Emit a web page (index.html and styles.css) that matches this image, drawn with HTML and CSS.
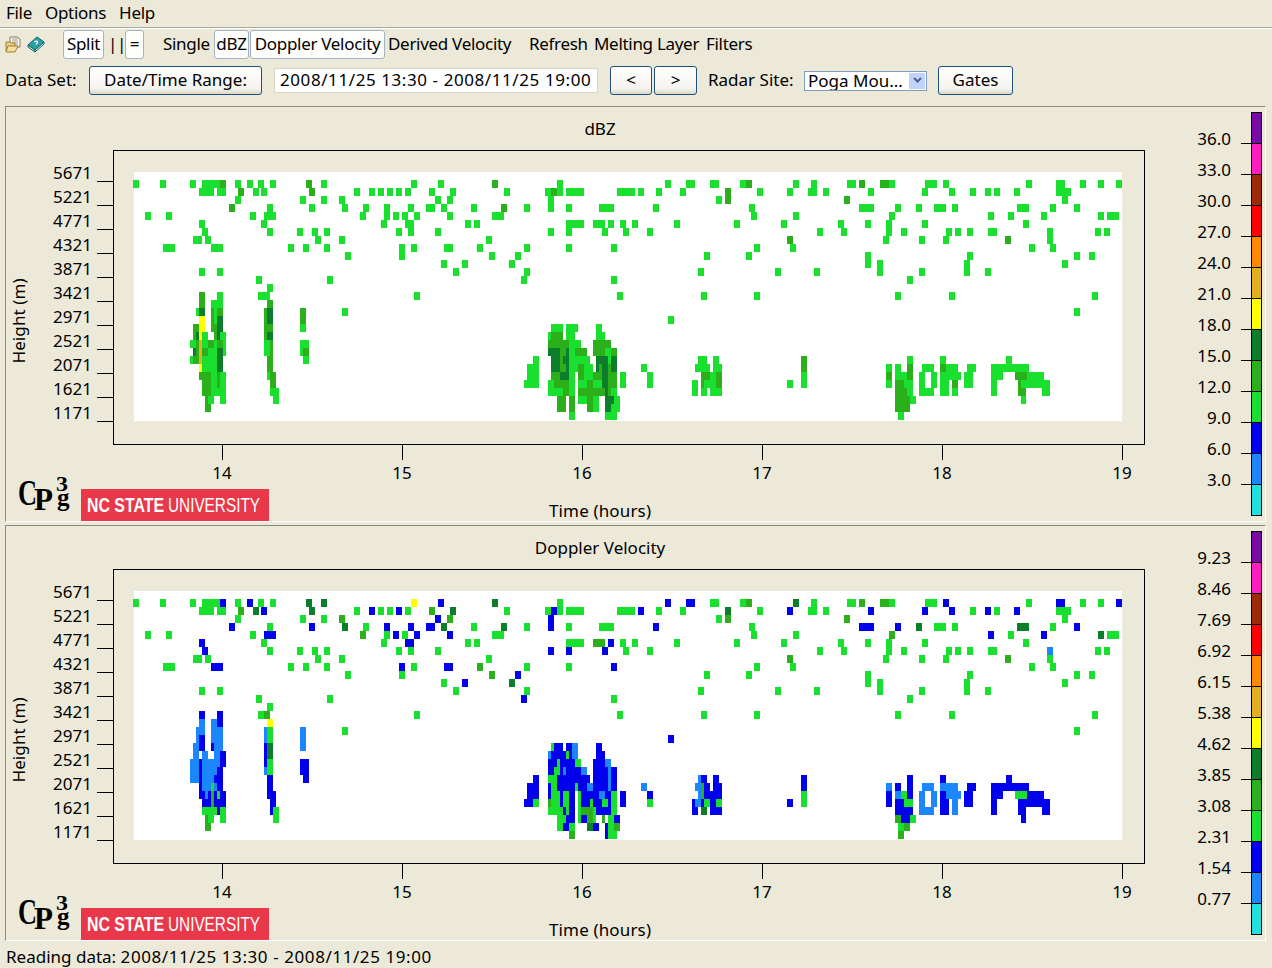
FILE: index.html
```html
<!DOCTYPE html>
<html lang="en">
<head>
    <meta charset="UTF-8">
    <title>Radar Viewer</title>
    <link rel="stylesheet" href="styles.css">
</head>
<body>
    <div class="menu-bar">
        <span>File</span>
        <span>Options</span>
        <span>Help</span>
    </div>

    <div class="tool-bar">
        <svg class="tool-icon" width="17" height="17" viewBox="0 0 17 17">
            <path d="M5 1h7l3 2v8H5z" fill="#fff" stroke="#8a7a50"/>
            <path d="M7 3h6M7 5h6M7 7h6M7 9h6" stroke="#9a9a8a"/>
            <path d="M1 6h4l1 1h4v8H1z" fill="#e8d080" stroke="#a08030"/>
            <path d="M3 10h10l-3 6H1z" fill="#f4e09a" stroke="#a08030"/>
        </svg>
        <svg class="tool-icon icon-book" width="18" height="17" viewBox="0 0 18 17">
            <path d="M1 9l9-8 7 5-9 8z" fill="#2aa0a8" stroke="#14606a"/>
            <path d="M1 9l7 5v2L1 11z" fill="#d8ecc0" stroke="#14606a"/>
            <path d="M8 16l9-8V6l-9 8z" fill="#e8f4d8" stroke="#14606a"/>
            <path d="M7.5 6c1-1.500 3.500-1 3 .5-.3 1-1.500 1-1.500 2" fill="none" stroke="#fff" stroke-width="1.200"/>
        </svg>
        <button class="tool-btn btn-split">Split</button>
        <span class="tool-text text-bars">||</span>
        <button class="tool-btn btn-equal">=</button>
        <span class="tool-text text-single">Single</span>
        <button class="tool-btn btn-dbz">dBZ</button>
        <button class="tool-btn btn-doppler">Doppler Velocity</button>
        <span class="tool-text text-derived">Derived Velocity</span>
        <span class="tool-text text-refresh">Refresh</span>
        <span class="tool-text text-melting">Melting Layer</span>
        <span class="tool-text text-filters">Filters</span>
    </div>

    <div class="data-bar">
        <span class="data-label">Data Set:</span>
        <button class="data-btn btn-range">Date/Time Range:</button>
        <div class="range-field"><span class="date-range">2008/11/25 13:30 - 2008/11/25 19:00</span></div>
        <button class="data-btn btn-prev">&lt;</button>
        <button class="data-btn btn-next">&gt;</button>
        <span class="data-label label-site">Radar Site:</span>
        <div class="site-select">
            <span class="site-value">Poga Mou...</span>
            <span class="site-arrow">
                <svg width="9" height="7" viewBox="0 0 9 7"><path d="M1 1l3.500 3.500L8 1" fill="none" stroke="#4d6185" stroke-width="2"/></svg>
            </span>
        </div>
        <button class="data-btn btn-gates">Gates</button>
    </div>

    <div class="plot-panel" id="dbz-panel"></div>
    <div class="plot-panel" id="velocity-panel"></div>

    <div class="status-bar">Reading data: <span class="date-range">2008/11/25 13:30 - 2008/11/25 19:00</span></div>

    <script src="plot.js"></script>
</body>
</html>
```

FILE: styles.css
```css
body {
    margin: 0;
    width: 1272px;
    height: 968px;
    overflow: hidden;
    background-color: #ece9d8;
    color: #000;
    font-family: "Noto Sans", sans-serif;
    font-size: 17px;
}

.menu-bar {
    display: flex;
    gap: 13px;
    height: 27px;
    line-height: 25px;
    padding-left: 6px;
    letter-spacing: -0.3px;
    border-bottom: 1px solid #aca899;
}

.tool-bar {
    display: flex;
    align-items: center;
    height: 31px;
    padding-left: 5px;
    border-top: 1px solid #fff;
}

.tool-icon {
    flex: none;
}

.icon-book {
    margin-left: 5px;
}

button {
    font-family: inherit;
    font-size: 17px;
    color: #000;
    padding: 0 0 2px;
    box-sizing: border-box;
}

.tool-btn {
    height: 29px;
    letter-spacing: -0.3px;
    background-color: #fdfdfb;
    border: 1px solid #a3b3c4;
    border-radius: 3px;
}

.btn-split { width: 41px; margin-left: 18px; }
.btn-equal { width: 19px; margin-left: 4px; }
.btn-dbz { width: 35px; margin-left: 5px; }
.btn-doppler { width: 135px; margin-left: 1px; }

.tool-text {
    padding-bottom: 2px;
    letter-spacing: -0.3px;
    white-space: nowrap;
}

.text-bars { width: 13px; margin-left: 4px; text-align: center; }
.text-single { width: 46px; margin-left: 19px; }
.text-derived { width: 125px; margin-left: 3px; }
.text-refresh { width: 58px; margin-left: 16px; }
.text-melting { width: 104px; margin-left: 7px; }
.text-filters { width: 46px; margin-left: 8px; }

.data-bar {
    display: flex;
    align-items: center;
    height: 29px;
    margin-top: 6px;
    padding-left: 5px;
}

.data-label {
    width: 72px;
    padding-bottom: 2px;
    white-space: nowrap;
}

.data-btn {
    height: 29px;
    background: linear-gradient(#ffffff, #f4f3ee 80%, #dcd8c8);
    border: 1px solid #1c5180;
    border-radius: 3px;
}

.btn-range { width: 173px; margin-left: 12px; }
.btn-prev { width: 42px; margin-left: 12px; }
.btn-next { width: 43px; margin-left: 2px; }
.btn-gates { width: 75px; margin-left: 11px; }

.range-field {
    width: 324px;
    height: 25px;
    line-height: 22px;
    margin-left: 12px;
    padding-left: 5px;
    box-sizing: border-box;
    background-color: #fff;
    border: 1px solid #d8d5c8;
    white-space: nowrap;
}

.date-range {
    letter-spacing: 0.58px;
}

.label-site {
    width: 85px;
    margin-left: 11px;
}

.site-select {
    display: flex;
    justify-content: space-between;
    width: 123px;
    height: 20px;
    margin-left: 11px;
    box-sizing: border-box;
    background-color: #fff;
    border: 1px solid #7f9db9;
    overflow: hidden;
}

.site-value {
    padding-left: 3px;
    line-height: 18px;
    white-space: nowrap;
}

.site-arrow {
    display: flex;
    align-items: center;
    justify-content: center;
    width: 16px;
    margin: 1px;
    background-color: #c1d3fb;
}

.plot-panel {
    width: 1261px;
    height: 416px;
    margin: 11px 0 0 5px;
    box-sizing: border-box;
    border: 1px solid #fff;
    border-top-color: #8d8a7a;
    border-left-color: #8d8a7a;
}

.plot-panel + .plot-panel {
    margin-top: 3px;
}

.plot-panel svg {
    display: block;
}

.plot-panel text {
    font-family: "Noto Sans", sans-serif;
    font-size: 17px;
    fill: #000;
}

.plot-panel .cell {
    shape-rendering: crispEdges;
}

.plot-panel .axis-line {
    stroke: #000;
    fill: none;
    shape-rendering: crispEdges;
}

.plot-panel .plot-frame {
    fill: #ece9d8;
    stroke: #000;
    shape-rendering: crispEdges;
}

.plot-panel .logo-c,
.plot-panel .logo-p,
.plot-panel .logo-exp,
.plot-panel .logo-sub {
    font-family: "Liberation Serif", serif;
    font-weight: bold;
}

.plot-panel .logo-c { font-size: 36px; }
.plot-panel .logo-p { font-size: 32px; }
.plot-panel .logo-exp { font-size: 21px; }
.plot-panel .logo-sub { font-size: 25px; }

.plot-panel .ncsu-bar { fill: #e8384a; }

.plot-panel .ncsu-bold,
.plot-panel .ncsu-thin {
    font-family: "Liberation Sans", sans-serif;
    font-size: 20px;
    fill: #fff;
}

.plot-panel .ncsu-bold { font-weight: bold; }

.status-bar {
    height: 21px;
    line-height: 19px;
    margin-top: 6px;
    padding-left: 6px;
    white-space: nowrap;
}
```

FILE: plot.js
```js
const COLORS = {
    g: '#19e02f', m: '#2bb01c', d: '#0b7d2b', y: '#ffff00', o: '#e0b020',
    b: '#0000ee', l: '#1c86ff'
};

// Cells: "x[:width][color]", width 6 and bright green unless stated. Index is the gate row.
const SCATTER = [
    '133 160 190 202:18 220m 235 247 258 270 306m 321 411 438 492m 557 665 686:9 710:9 740 746m 793 811 847:9 859m 880:9m 889 925:12 943 1026 1056:9 1080 1098 1116',
    '199:15 217:9 238m 253 261 309m 354 369 378 387 396 405 429 450 504 545 551m 557 566:18 617:18 638 656 680 725m 757 787 808:9 823 868 922 949 970 985 994 1014 1056:15',
    '235 300 321 339 435 447 548 716 725m 844m 1062',
    '229m 267 309 342 363 384 408 426:9 441 471 501m 524 548 566 599:15 653 749 859:15 895 916 934:12 952 1017:12 1050 1074',
    '145 166 250 264:12 360 384 393 402 414 447 492:12 751 793 889 988 1008 1041 1098 1107:12',
    '199 261 381 405:9 465 474 566:18 593:12 608 620 632 674 734 781 838 865 886 922 1023',
    '202 267 297 312 324 396 408 435 548 566 602 623 647 817 841 886 901 946 955 967 988:9 1047 1095 1104',
    '193:9 205 315 339 486 787m 883 919 943 1005m 1047',
    '163:12 211:12 288 303 324 399 411 444:9 477 524 566 611 754 790 1029 1050',
    '345 399 489 515 704 746 865 967 1074 1089',
    '441 462 509 865 877 964 1062',
    '199 217 453 524 698 775 814 877 919 964 985',
    '256 327 521 611 907',
    '267',
    '258:12 414 617 701 754 895 949 1092',
    '',
    '342 1074',
    '668'
];

// Velocity colors of the scattered gates, by row and x
const SCATTER_VELOCITY = {
    0: { 220: 'b', 247: 'b', 306: 'd', 321: 'd', 411: 'y', 438: 'b', 492: 'd', 665: 'b', 686: 'b', 743: 'b', 793: 'd', 943: 'b', 1056: 'b', 1116: 'b' },
    1: { 238: 'm', 253: 'd', 261: 'b', 309: 'd', 369: 'b', 396: 'b', 429: 'm', 450: 'd', 551: 'b', 638: 'b', 725: 'd', 787: 'b', 868: 'b', 922: 'b', 949: 'b', 985: 'b', 1014: 'b' },
    2: { 339: 'm', 435: 'b', 447: 'm', 548: 'b' },
    3: { 229: 'b', 309: 'b', 342: 'd', 384: 'b', 408: 'b', 426: 'b', 441: 'd', 501: 'd', 548: 'b', 653: 'b', 859: 'b', 895: 'b', 916: 'd', 1017: 'd', 1074: 'b' },
    4: { 264: 'b', 360: 'm', 393: 'b', 414: 'b', 447: 'b', 889: 'm', 988: 'b', 1041: 'b', 1098: 'd' },
    5: { 199: 'b', 405: 'b', 593: 'm', 608: 'b' },
    6: { 202: 'b', 548: 'b', 566: 'b', 602: 'b', 1047: 'l' },
    8: { 211: 'b', 399: 'b', 444: 'b', 477: 'm', 611: 'b' },
    9: { 489: 'm', 515: 'b' },
    10: { 462: 'b', 509: 'd' },
    12: { 521: 'b' }
};

const DBZ_STORM = {
    14: '199m 217',
    15: '199m 211:12 267m',
    16: '196:3 199d 211:3m 214:3 217m 264:3m 267d 300m',
    17: '199y 211:3m 214:3 217d 264:3m 267d 300m 668',
    18: '193m 199y 211m 217d 264:9m 300 551:12 566:12 596',
    19: '193:3m 196:3d 199:3y 202 214:3m 217:3d 220 264:3m 267d 548:3 551:12m 566:9 596:9',
    20: '190 196:3m 199:3o 202 208m 214:3 217m 223:3 264 270:3m 300:9 548:12m 560:9m 569:12 593:18m',
    21: '193:3d 196:3m 199:3o 202m 208:9 217d 223:3 264 270:3m 300 303m 548:12d 560:6m 566:3d 569 575:12m 593:12m 605 611m',
    22: '190:3 193m 199:3o 202:15 217d 267m 303 533 551:9d 560:3m 563:6d 569:21 596:12d 608:3 611d 698:9 713 801m 907 940 1006',
    23: '199:3y 202:15 217d 267m 527:12 551:9d 560m 566:3d 569:9 578m 584:9 596:3d 599:3m 602d 608:3m 611d 641 695:15 713:9 801m 886 895 907m 922:12 940m 946:12 967:9 991:14 1005:24',
    24: '199:12m 211 217:3m 220 267:3 270m 527:12 551:9m 560:9d 569 578m 584:9 593:9m 602d 608:9m 620 647 701:9m 710 716m 801 886m 895 901 907m 919 931 940 946:15 964:9 991:12 1015:12m 1027:17',
    25: '202:9m 211 217:3m 220 270m 524:15 548 554m 560:9m 569 578:9 587m 593:9 602d 608:9m 620 647 692 701:3m 704 710 716m 787 801 886 895:9m 904:9 919 931 940:9 952m 964:9 991 1018:3m 1021:18 1039:11',
    26: '202:9m 211:12 220 270:9 548:9 557 563m 569 578:9m 587m 593:12m 605:3d 608:3m 611 692 701 710:12 895:12m 907 919:15 940:9 952 991 1018:8m 1042:8',
    27: '205:3m 208 220 273 557:9m 569m 578:9 587m 593 605:9d 614 895:15m 910 1021:5',
    28: '205m 557:9m 569m 587m 593 605d 611:9 895:15m',
    29: '569 605:12 898'
};

const VELOCITY_STORM = {
    14: '199b 217b 258 264m',
    15: '199l 211l 217b 267y',
    16: '196:9l 211:12l 264:3l 267 300l',
    17: '196:3l 199b 211:12l 264:3l 267 300l 668b',
    18: '193l 199b 211:3b 214:9l 264:3b 267d 300l 551:3 554:9b 566b 572l 596b',
    19: '193l 202l 214l 220b 264:3b 267d 548:3l 551:15b 566:3 569:3b 572l 596:9b',
    20: '190:9l 199:3b 202:18l 220b 264:3b 267 300:9b 548:9b 557:3 560:12b 572:3b 575 593:9b 602:3b 605l',
    21: '190:9l 199:3b 202:15l 217b 264:3l 267 300:9b 548b 554 560:3b 563:3l 566:15b 581l 593:15b 608:3l 611b',
    22: '190:9l 199:3b 202:12l 214:9b 267b 303b 533b 548:9 557:33b 593:15b 608:3l 611b 698:3l 701b 713b 801b 907b 940b 1006b',
    23: '199:3b 202:9l 211:3 214:3l 217b 267b 527:12b 548:3b 551 557:18b 575:3 578:9b 587l 593:15b 608:3l 611b 641l 695l 701:3m 704b 713:9b 801b 886l 895b 907b 922:12l 940l 946:12l 967:9b 991:14b 1005:24b',
    24: '199b 205:3l 208:3b 211:3m 214:3b 217:3 220b 267:9b 527:12b 548:3b 551 557:3 560:3b 563 569b 578:3 581:18b 599l 605b 611 620b 647b 698:3l 701:3m 704:18b 801 886b 895l 901 907b 919l 931l 940b 946:15l 964:9b 991:12b 1015:12 1027:17b',
    25: '202:9b 211:3m 214b 220b 270b 524:9b 533 548:3m 551:9 560:3b 563 569b 578:3 581:9b 590:3 593:9b 602 608:3b 611 620b 647 692:3b 695l 701:3b 704 710b 716 787b 801 886b 895:9b 904:9 919l 931l 940:9b 952l 964:9b 991b 1018:3b 1021:18b 1039:11b',
    26: '202:15 217:3b 220 270:3b 273 548:15 563:3b 566:3 569b 578:3 581:12m 593:3 596:15b 611 692b 701d 710:12b 895:12b 907b 919:15l 940:9b 952l 991b 1018:8b 1042:8b',
    27: '205:3m 208 220 273 557:9 566:9b 578:3 581b 587m 593:3 602:3m 608 614b 895:6m 901:9b 910 1021:5b',
    28: '205m 557 563b 569 587d 593b 605:3b 608 614m 898:6 904:6m',
    29: '569m 605:3b 608:9 898m'
};

const LEGEND_COLORS = ['#7a0aa8', '#ff1fc0', '#a02a08', '#ff0000', '#ff8a00', '#e0b020', '#ffff00',
                       '#0b7d2b', '#2bb01c', '#19e02f', '#0000ee', '#1c86ff', '#20e0e0'];

const HEIGHTS = [5671, 5221, 4771, 4321, 3871, 3421, 2971, 2521, 2071, 1621, 1171];
const HOURS = [14, 15, 16, 17, 18, 19];

function el(parent, tag, attrs, text) {
    const node = document.createElementNS('http://www.w3.org/2000/svg', tag);
    for (const key in attrs) node.setAttribute(key, attrs[key]);
    if (text !== undefined) node.textContent = text;
    parent.appendChild(node);
    return node;
}

function drawCells(svg, row, spec, recolor) {
    spec.split(' ').filter(Boolean).forEach(token => {
        const match = token.match(/^(\d+)(?::(\d+))?([a-z])?$/);
        const x = +match[1];
        const color = (recolor && recolor[x]) || match[3] || 'g';
        el(svg, 'rect', {
            class: 'cell', x: x, y: 180 + row * 8,
            width: match[2] ? +match[2] : 6, height: 8, fill: COLORS[color]
        });
    });
}

function drawLogos(svg) {
    el(svg, 'text', { class: 'logo-c', x: 18, y: 505, textLength: 19, lengthAdjust: 'spacingAndGlyphs' }, 'C');
    el(svg, 'text', { class: 'logo-p', x: 34, y: 510, textLength: 19, lengthAdjust: 'spacingAndGlyphs' }, 'P');
    el(svg, 'text', { class: 'logo-exp', x: 56, y: 491, textLength: 12, lengthAdjust: 'spacingAndGlyphs' }, '3');
    el(svg, 'text', { class: 'logo-sub', x: 57, y: 506 }, 'g');

    el(svg, 'rect', { class: 'ncsu-bar', x: 81, y: 489, width: 188, height: 32 });
    el(svg, 'text', { class: 'ncsu-bold', x: 87, y: 512, textLength: 77, lengthAdjust: 'spacingAndGlyphs' }, 'NC STATE');
    el(svg, 'text', { class: 'ncsu-thin', x: 168, y: 512, textLength: 92, lengthAdjust: 'spacingAndGlyphs' }, 'UNIVERSITY');
}

function drawPlot(panelId, title, scale, storm, recolors) {
    // Coordinates are those of the first panel on the page
    const svg = el(document.getElementById(panelId), 'svg', {
        width: 1259, height: 414, viewBox: '6 107 1259 414'
    });

    el(svg, 'text', { x: 600, y: 135, 'text-anchor': 'middle' }, title);
    el(svg, 'rect', { class: 'plot-frame', x: 113.5, y: 150.5, width: 1031, height: 294 });
    el(svg, 'rect', { x: 134, y: 172, width: 988, height: 249, fill: '#fff' });

    SCATTER.forEach((spec, row) => drawCells(svg, row, spec, recolors ? recolors[row] : null));
    for (const row in storm) drawCells(svg, +row, storm[row]);

    HEIGHTS.forEach((value, i) => {
        const y = 181.5 + i * 24;
        el(svg, 'path', { class: 'axis-line', d: `M97 ${y}H113` });
        el(svg, 'text', { x: 92, y: y - 3, 'text-anchor': 'end' }, value);
    });
    HOURS.forEach((hour, i) => {
        const x = 222.5 + i * 180;
        el(svg, 'path', { class: 'axis-line', d: `M${x} 445V460` });
        el(svg, 'text', { x: x - 0.5, y: 479, 'text-anchor': 'middle' }, hour);
    });

    el(svg, 'text', { x: 600, y: 517, 'text-anchor': 'middle', textLength: 102 }, 'Time (hours)');
    el(svg, 'text', { transform: 'translate(25 321) rotate(-90)', 'text-anchor': 'middle', textLength: 85 }, 'Height (m)');

    // Color scale
    LEGEND_COLORS.forEach((color, i) => {
        el(svg, 'rect', { class: 'cell', x: 1251, y: 112 + i * 31, width: 11, height: 31, fill: color });
    });
    el(svg, 'rect', { class: 'axis-line', x: 1251.5, y: 112.5, width: 10, height: 403 });
    scale.forEach((label, i) => {
        const y = 143.5 + i * 31;
        el(svg, 'path', { class: 'axis-line', d: `M1241 ${y}H1261` });
        el(svg, 'text', { x: 1231, y: y + 1, 'text-anchor': 'end' }, label);
    });

    drawLogos(svg);
}

drawPlot('dbz-panel', 'dBZ',
    ['36.0', '33.0', '30.0', '27.0', '24.0', '21.0', '18.0', '15.0', '12.0', '9.0', '6.0', '3.0'],
    DBZ_STORM);
drawPlot('velocity-panel', 'Doppler Velocity',
    ['9.23', '8.46', '7.69', '6.92', '6.15', '5.38', '4.62', '3.85', '3.08', '2.31', '1.54', '0.77'],
    VELOCITY_STORM, SCATTER_VELOCITY);
```
